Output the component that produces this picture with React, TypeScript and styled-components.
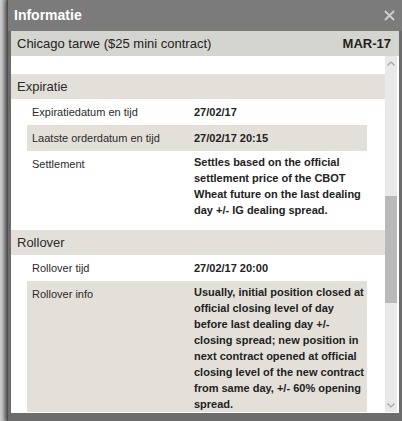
import * as React from "react"
import styled, { createGlobalStyle } from "styled-components"

const GlobalStyle = createGlobalStyle`
    html, body {
        margin: 0;
        padding: 0;
        height: 421px;
        overflow: hidden;
        background: #c6c6c6;
        font-family: "Liberation Sans", Arial, sans-serif;
    }
`

const Page = styled.div`
    height: 421px;
    display: flex;
    padding-left: 7px;
    background: linear-gradient(to right, #cfcfcf 0px, #bdbdbd 3px, #8a8a8a 7px);
`

const Dialog = styled.div`
    flex: 1;
    display: flex;
    flex-direction: column;
    background: #6c6c6c;
    border-left: 1px solid #4c4c4c;
    padding: 0 3px 8px 3px;
    box-shadow: -2px 0 4px rgba(0, 0, 0, 0.45);
`

const TitleBar = styled.div`
    height: 31px;
    margin: 0 -3px;
    padding: 0 7px 0 6px;
    display: flex;
    align-items: center;
    justify-content: space-between;
    background: #7b7b7b;
`

const Title = styled.div`
    color: #ffffff;
    font-size: 14px;
    font-weight: bold;
    padding-bottom: 1px;
`

const CloseButton = styled.div`
    width: 11px;
    height: 11px;
    margin-bottom: 1px;
    display: flex;
`

const Content = styled.div`
    flex: 1;
    display: flex;
    flex-direction: column;
    background: #ffffff;
    min-height: 0;
`

const InstrumentHeader = styled.div`
    height: 25px;
    flex-shrink: 0;
    display: flex;
    align-items: center;
    justify-content: space-between;
    padding: 0 8px 0 6px;
    background: #d5d5cf;
    color: #222222;
    font-size: 13px;
`

const Expiry = styled.span`
    font-weight: bold;
`

const Body = styled.div`
    flex: 1;
    display: flex;
    min-height: 0;
    padding-bottom: 1px;
`

const ScrollPane = styled.div`
    flex: 1;
    overflow: hidden;
    padding-top: 18px;
`

const Section = styled.div``

const SectionTitle = styled.div`
    height: 25px;
    line-height: 25px;
    padding-left: 6px;
    background: #e3e0d9;
    color: #2b2b2b;
    font-size: 13px;
`

const Rows = styled.div`
    padding: 0 18px 0 16px;
`

const Row = styled.div<{ $shaded: boolean }>`
    display: grid;
    grid-template-columns: 167px 1fr;
    background: ${(p) => (p.$shaded ? "#e3e0d9" : "#ffffff")};
    font-size: 11px;
    line-height: 16px;
    color: #2b2b2b;
`

const Label = styled.div`
    padding: 5px 0 5px 5px;
`

const Value = styled.div<{ $wrapped: boolean }>`
    font-weight: bold;
    color: #222222;
    padding: ${(p) => (p.$wrapped ? "3px 0 12px 0" : "5px 0")};
`

const Scrollbar = styled.div`
    width: 12px;
    margin-right: 2px;
    display: flex;
    flex-direction: column;
    background: #e9e9e9;
`

const ScrollArrow = styled.div`
    height: 14px;
    flex-shrink: 0;
    display: flex;
    align-items: center;
    justify-content: center;
`

const ScrollTrack = styled.div`
    flex: 1;
    display: flex;
    flex-direction: column;
`

const ScrollThumb = styled.div<{ $offset: number; $size: number }>`
    margin-top: ${(p) => p.$offset}px;
    height: ${(p) => p.$size}px;
    background: #b9b9b9;
`

interface InfoRow {
    label: string
    value: string
}

interface InfoSection {
    title: string
    rows: InfoRow[]
}

const sections: InfoSection[] = [
    {
        title: "Expiratie",
        rows: [
            { label: "Expiratiedatum en tijd", value: "27/02/17" },
            { label: "Laatste orderdatum en tijd", value: "27/02/17 20:15" },
            {
                label: "Settlement",
                value:
                    "Settles based on the official settlement price of the CBOT Wheat future on the last dealing day +/- IG dealing spread.",
            },
        ],
    },
    {
        title: "Rollover",
        rows: [
            { label: "Rollover tijd", value: "27/02/17 20:00" },
            {
                label: "Rollover info",
                value:
                    "Usually, initial position closed at official closing level of day before last dealing day +/- closing spread; new position in next contract opened at official closing level of the new contract from same day, +/- 60% opening spread.",
            },
        ],
    },
]

const Chevron = ({ up }: { up: boolean }) => (
    <svg width="8" height="5" viewBox="0 0 8 5">
        <path
            d={up ? "M0.5 4.5 L4 1 L7.5 4.5" : "M0.5 0.5 L4 4 L7.5 0.5"}
            fill="none"
            stroke="#a4a4a4"
            strokeWidth="1.2"
        />
    </svg>
)

export default function App(): JSX.Element {
    return (
        <>
            <GlobalStyle />
            <Page>
                <Dialog>
                    <TitleBar>
                        <Title>Informatie</Title>
                        <CloseButton>
                            <svg width="11" height="11" viewBox="0 0 11 11">
                                <path
                                    d="M1 1 L10 10 M10 1 L1 10"
                                    stroke="#cdcdcd"
                                    strokeWidth="2"
                                />
                            </svg>
                        </CloseButton>
                    </TitleBar>
                    <Content>
                        <InstrumentHeader>
                            <span>Chicago tarwe ($25 mini contract)</span>
                            <Expiry>MAR-17</Expiry>
                        </InstrumentHeader>
                        <Body>
                            <ScrollPane>
                                {sections.map((section) => (
                                    <Section key={section.title}>
                                        <SectionTitle>{section.title}</SectionTitle>
                                        <Rows>
                                            {section.rows.map((row, i) => (
                                                <Row key={row.label} $shaded={i % 2 === 1}>
                                                    <Label>{row.label}</Label>
                                                    <Value $wrapped={row.value.length > 40}>
                                                        {row.value}
                                                    </Value>
                                                </Row>
                                            ))}
                                        </Rows>
                                    </Section>
                                ))}
                            </ScrollPane>
                            <Scrollbar>
                                <ScrollArrow>
                                    <Chevron up={true} />
                                </ScrollArrow>
                                <ScrollTrack>
                                    <ScrollThumb $offset={126} $size={107} />
                                </ScrollTrack>
                                <ScrollArrow>
                                    <Chevron up={false} />
                                </ScrollArrow>
                            </Scrollbar>
                        </Body>
                    </Content>
                </Dialog>
            </Page>
        </>
    )
}
